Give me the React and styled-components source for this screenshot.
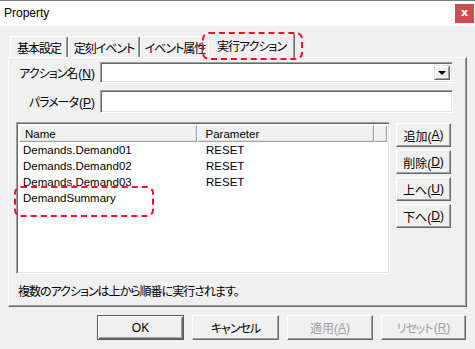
import React from "react";
import styled, { createGlobalStyle, css } from "styled-components";

const Global = createGlobalStyle`
	html, body {
		margin: 0;
		padding: 0;
		background: #f0f0f0;
	}
	body {
		font-family: "Liberation Sans", "Noto Sans CJK JP", sans-serif;
		font-size: 12px;
		font-feature-settings: "palt";
		color: #000;
	}
	* {
		box-sizing: border-box;
	}
`;

const raised = css`
	border: 1px solid;
	border-color: #fff #696969 #696969 #fff;
	box-shadow: inset -1px -1px #a0a0a0;
`;

const sunken = css`
	border: 1px solid;
	border-color: #a0a0a0 #fff #fff #a0a0a0;
	box-shadow: inset 1px 1px #696969, inset -1px -1px #e3e3e3;
`;

const marker = css`
	&::after {
		content: "";
		position: absolute;
		border: 2px dashed #f0102a;
		border-radius: 7px;
		pointer-events: none;
	}
`;

const tabs = [
	{ label: "基本設定", width: 58 },
	{ label: "定刻イベント", width: 72 },
	{ label: "イベント属性", width: 70 },
];

const actions = [
	{ name: "Demands.Demand01", param: "RESET" },
	{ name: "Demands.Demand02", param: "RESET" },
	{ name: "Demands.Demand03", param: "RESET" },
	{ name: "DemandSummary", param: "", marked: true },
];

const App = () => {
	return (
		<>
			<Global />
			<Window>
				<TitleBar>
					<Title>Property</Title>
					<CloseButton>x</CloseButton>
				</TitleBar>
				<Body>
					<TabStrip>
						{tabs.map((tab) => (
							<Tab key={tab.label} $width={tab.width}>
								{tab.label}
							</Tab>
						))}
						<ActiveTab>実行アクション</ActiveTab>
					</TabStrip>
					<Panel>
						<FieldRow>
							<FieldLabel>
								アクション名<Key>(<u>N</u>)</Key>
							</FieldLabel>
							<Combo>
								<ComboButton>
									<Arrow />
								</ComboButton>
							</Combo>
						</FieldRow>
						<FieldRow $gap={7}>
							<FieldLabel>
								パラメータ<Key>(<u>P</u>)</Key>
							</FieldLabel>
							<TextBox />
						</FieldRow>
						<ListArea>
							<ListView>
								<Header>
									<HeadCell $width={179} $pad={5}>
										Name
									</HeadCell>
									<HeadCell $width={179} $pad={8}>
										Parameter
									</HeadCell>
									<HeadCell $width={13} />
								</Header>
								{actions.map((action) => (
									<Row key={action.name}>
										<NameCell>
											<NameText $marked={action.marked}>{action.name}</NameText>
										</NameCell>
										<ParamCell>{action.param}</ParamCell>
									</Row>
								))}
							</ListView>
							<SideButtons>
								<SideButton>
									追加(<u>A</u>)
								</SideButton>
								<SideButton>
									削除(<u>D</u>)
								</SideButton>
								<SideButton>
									上へ(<u>U</u>)
								</SideButton>
								<SideButton>
									下へ(<u>D</u>)
								</SideButton>
							</SideButtons>
						</ListArea>
						<Note>複数のアクションは上から順番に実行されます。</Note>
					</Panel>
					<ButtonBar>
						<DialogButton $default $width={87}>
							OK
						</DialogButton>
						<DialogButton $width={87} $tight>
							キャンセル
						</DialogButton>
						<DialogButton $disabled $width={86}>
							適用(<u>A</u>)
						</DialogButton>
						<DialogButton $disabled $width={85} $tight>
							リセット<Key>(<u>R</u>)</Key>
						</DialogButton>
					</ButtonBar>
				</Body>
			</Window>
		</>
	);
};

const Window = styled.div`
	width: 475px;
	height: 349px;
	display: flex;
	flex-direction: column;
	background: #f0f0f0;
	overflow: hidden;
`;

const TitleBar = styled.div`
	height: 26px;
	display: flex;
	align-items: center;
	justify-content: space-between;
	background: #fff;
	border-top: 1px solid #7a7a7a;
	padding: 0 1px 1px 4px;
`;

const Title = styled.span`
	font-size: 12px;
	color: #000;
`;

const CloseButton = styled.div`
	width: 19px;
	height: 19px;
	display: flex;
	align-items: center;
	justify-content: center;
	background: #c75050;
	color: #fff;
	font-weight: bold;
	font-size: 11px;
	font-family: "DejaVu Sans", sans-serif;
	padding-bottom: 2px;
`;

const Body = styled.div`
	flex: 1;
	display: flex;
	flex-direction: column;
	padding: 7px 8px 0;
`;

const TabStrip = styled.div`
	height: 24px;
	display: flex;
	align-items: flex-end;
	padding-left: 2px;
	position: relative;
	z-index: 1;
`;

const Tab = styled.div`
	width: ${(p) => p.$width}px;
	height: 21px;
	display: flex;
	align-items: center;
	justify-content: center;
	letter-spacing: -1px;
	border: 1px solid;
	border-bottom: none;
	border-color: #fff #696969 transparent #fff;
	box-shadow: inset -1px 0 #a0a0a0;
	border-radius: 2px 2px 0 0;
	padding-top: 1px;
`;

const ActiveTab = styled(Tab)`
	width: 87px;
	height: 25px;
	margin-left: -2px;
	margin-bottom: -1px;
	background: #f0f0f0;
	position: relative;
	padding-bottom: 2px;
	${marker}
	&::after {
		left: -7px;
		right: -9px;
		top: -2px;
		bottom: -2px;
	}
`;

const Panel = styled.div`
	height: 250px;
	display: flex;
	flex-direction: column;
	padding: 4px 13px 0 0;
	${raised}
`;

const FieldRow = styled.div`
	display: flex;
	align-items: center;
	gap: 4px;
	margin-top: ${(p) => p.$gap || 0}px;
`;

const FieldLabel = styled.span`
	width: 87px;
	text-align: right;
	white-space: nowrap;
	letter-spacing: -1px;
	padding-right: 1px;
`;

const Key = styled.span`
	letter-spacing: 0;
	margin-left: 1px;
`;

const Combo = styled.div`
	flex: 1;
	height: 21px;
	display: flex;
	justify-content: flex-end;
	align-items: stretch;
	background: #fff;
	padding: 2px;
	${sunken}
`;

const ComboButton = styled.div`
	width: 16px;
	display: flex;
	align-items: center;
	justify-content: center;
	background: #f0f0f0;
	border: 1px solid;
	border-color: #e3e3e3 #696969 #696969 #e3e3e3;
	box-shadow: inset 1px 1px #fff, inset -1px -1px #a0a0a0;
`;

const Arrow = styled.div`
	width: 0;
	height: 0;
	border-left: 4px solid transparent;
	border-right: 4px solid transparent;
	border-top: 4px solid #000;
	margin-top: 1px;
`;

const TextBox = styled.div`
	flex: 1;
	height: 23px;
	background: #fff;
	${sunken}
`;

const ListArea = styled.div`
	display: flex;
	gap: 6px;
	margin: 9px 0 0 7px;
`;

const ListView = styled.div`
	width: 374px;
	height: 152px;
	background: #fff;
	padding: 2px;
	${sunken}
`;

const Header = styled.div`
	display: flex;
	height: 17px;
	font-family: "Liberation Sans", sans-serif;
	font-size: 11.5px;
`;

const HeadCell = styled.div`
	width: ${(p) => p.$width}px;
	display: flex;
	align-items: center;
	padding-left: ${(p) => p.$pad || 0}px;
	background: #f0f0f0;
	border: 1px solid;
	border-color: #fff #a0a0a0 #a0a0a0 #fff;
	box-shadow: inset -1px -1px #e3e3e3;
`;

const Row = styled.div`
	display: flex;
	height: 16px;
	align-items: center;
	font-family: "Liberation Sans", sans-serif;
	font-size: 11.5px;
	&:first-of-type {
		margin-top: 1px;
	}
`;

const NameCell = styled.div`
	width: 179px;
	padding-left: 4px;
`;

const NameText = styled.span`
	position: relative;
	${(p) =>
		p.$marked &&
		css`
			${marker}
			&::after {
				left: -9px;
				top: -6px;
				width: 136px;
				height: 27px;
			}
		`}
`;

const ParamCell = styled.div`
	padding-left: 8px;
`;

const SideButtons = styled.div`
	display: flex;
	flex-direction: column;
	gap: 3px;
	padding-top: 1px;
`;

const buttonFace = css`
	display: flex;
	align-items: center;
	justify-content: center;
	background: #f0f0f0;
	white-space: nowrap;
	border: 1px solid;
	border-color: #fff #696969 #696969 #fff;
	box-shadow: inset -1px -1px #a0a0a0;
`;

const SideButton = styled.div`
	width: 55px;
	height: 24px;
	${buttonFace}
`;

const Note = styled.div`
	margin: 10px 0 0 9px;
	line-height: 16px;
	letter-spacing: -1px;
`;

const ButtonBar = styled.div`
	display: flex;
	justify-content: flex-end;
	gap: 8px;
	margin-top: 8px;
	padding-right: 1px;
`;

const DialogButton = styled.div`
	width: ${(p) => p.$width}px;
	height: 25px;
	${buttonFace}
	color: ${(p) => (p.$disabled ? "#a0a0a0" : "#000")};
	letter-spacing: ${(p) => (p.$tight ? "-1px" : "0")};
	${(p) =>
		p.$default &&
		css`
			border: 1px solid #5a5a5a;
			box-shadow: inset 1px 1px #fff, inset -1px -1px #696969, inset -2px -2px #a0a0a0;
		`}
`;

export default App;
